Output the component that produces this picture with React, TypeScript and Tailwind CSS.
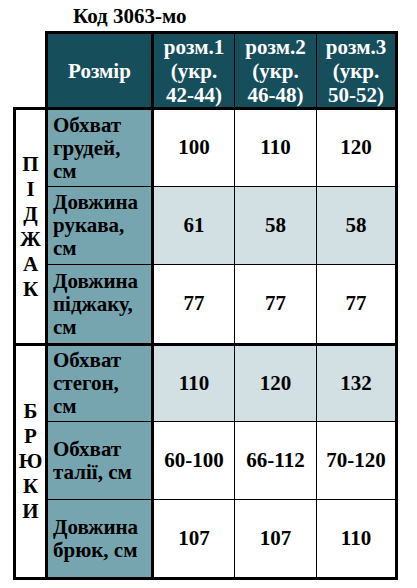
const sizes = ["розм.1 (укр. 42-44)", "розм.2 (укр. 46-48)", "розм.3 (укр. 50-52)"];
const widths = ["w-[80px]", "w-[82px]", "w-[79px]"];

type Row = { label: string; values: string[]; shaded?: boolean; h: string };

const groups: { letters: string[]; rows: Row[] }[] = [
  {
    letters: ["П", "І", "Д", "Ж", "А", "К"],
    rows: [
      { label: "Обхват грудей, см", values: ["100", "110", "120"], h: "h-[77px]" },
      { label: "Довжина рукава, см", values: ["61", "58", "58"], shaded: true, h: "h-[78px]" },
      { label: "Довжина піджаку, см", values: ["77", "77", "77"], h: "h-[78px]" },
    ],
  },
  {
    letters: ["Б", "Р", "Ю", "К", "И"],
    rows: [
      { label: "Обхват стегон, см", values: ["110", "120", "132"], shaded: true, h: "h-[76px]" },
      { label: "Обхват талії, см", values: ["60-100", "66-112", "70-120"], h: "h-[78px]" },
      { label: "Довжина брюк, см", values: ["107", "107", "110"], h: "h-[77px]" },
    ],
  },
];

export default function App() {
  return (
    <div className="w-[417px] h-[588px] bg-white pl-[13px] font-['Liberation_Serif','Times_New_Roman',serif] text-black">
      {/* заголовок */}
      <div className="h-[31px] pl-[60px] pt-[5px] text-[21px] font-bold leading-[22px]">
        Код 3063-мо
      </div>

      {/* шапка */}
      <div className="ml-[32px] w-[353px] h-[76px] border-[3px] border-b-0 border-black bg-[#164e5b] flex text-white text-[21px] font-bold leading-[24px]">
        <div className="w-[106px] border-r-[3px] border-black flex items-center justify-center">Розмір</div>
        {sizes.map((s, i) => (
          <div
            key={s}
            className={`${widths[i]} ${i > 0 ? "border-l border-black" : ""} flex items-center justify-center text-center px-[8px]`}
          >
            {s}
          </div>
        ))}
      </div>

      {/* тіло */}
      <div className="w-[385px] border-[3px] border-black">
        {groups.map((g, gi) => (
          <div key={gi} className={`flex ${gi > 0 ? "border-t-[3px] border-black" : ""}`}>
            <div className="w-[32px] border-r-[3px] border-black flex flex-col items-center justify-center text-[21px] font-bold leading-[25px]">
              {g.letters.map((l, li) => (
                <span key={li}>{l}</span>
              ))}
            </div>
            <div className="flex flex-col">
              {g.rows.map((r, ri) => (
                <div
                  key={r.label}
                  className={`flex ${r.h} ${ri < g.rows.length - 1 ? "border-b border-black" : ""}`}
                >
                  <div className="w-[106px] bg-[#76a5b0] border-r-[3px] border-black flex items-center pl-[5px] pr-[10px] text-[21px] font-bold leading-[23px]">
                    {r.label}
                  </div>
                  {r.values.map((v, vi) => (
                    <div
                      key={vi}
                      className={`${widths[vi]} ${vi > 0 ? "border-l border-black" : ""} ${
                        r.shaded ? "bg-[#d2e0e4]" : "bg-white"
                      } flex items-center justify-center text-[21px] font-bold`}
                    >
                      {v}
                    </div>
                  ))}
                </div>
              ))}
            </div>
          </div>
        ))}
      </div>
    </div>
  );
}
